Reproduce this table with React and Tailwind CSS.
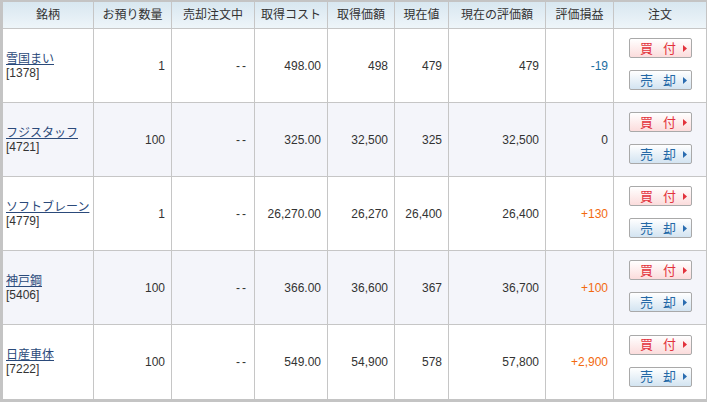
const columns = [
  { label: '銘柄', w: 'w-[91px]' },
  { label: 'お預り数量', w: 'w-[78px]' },
  { label: '売却注文中', w: 'w-[83px]' },
  { label: '取得コスト', w: 'w-[73px]' },
  { label: '取得価額', w: 'w-[67px]' },
  { label: '現在値', w: 'w-[54px]' },
  { label: '現在の評価額', w: 'w-[97px]' },
  { label: '評価損益', w: 'w-[68px]' },
  { label: '注文', w: 'w-[92px]' },
]

const rows = [
  { name: '雪国まい', code: '1378', qty: '1', cost: '498.00', amount: '498', price: '479', value: '479', pl: '-19' },
  { name: 'フジスタッフ', code: '4721', qty: '100', cost: '325.00', amount: '32,500', price: '325', value: '32,500', pl: '0' },
  { name: 'ソフトブレーン', code: '4779', qty: '1', cost: '26,270.00', amount: '26,270', price: '26,400', value: '26,400', pl: '+130' },
  { name: '神戸鋼', code: '5406', qty: '100', cost: '366.00', amount: '36,600', price: '367', value: '36,700', pl: '+100' },
  { name: '日産車体', code: '7222', qty: '100', cost: '549.00', amount: '54,900', price: '578', value: '57,800', pl: '+2,900' },
]

const plColor = (pl) => {
  if (pl.startsWith('-')) return 'text-[#1c6d9f]'
  if (pl.startsWith('+')) return 'text-[#f26a10]'
  return 'text-[#333]'
}

const Arrow = ({ color }) => (
  <svg width="4" height="7" viewBox="0 0 4 7" className="shrink-0 ml-[7px]">
    <path d="M0 0 L4 3.5 L0 7 Z" fill={color} />
  </svg>
)

const OrderButton = ({ kind }) => {
  const buy = kind === 'buy'
  return (
    <button
      className={`flex items-center w-[63px] h-[20px] border border-[#a9a9a9] rounded-[2px] pl-[10px] text-[13px] leading-none ${
        buy ? 'bg-gradient-to-b from-white to-[#fbdcdc] text-[#e2323c]' : 'bg-gradient-to-b from-white to-[#d3e4f1] text-[#2468a6]'
      }`}
    >
      <span>{buy ? '買' : '売'}</span>
      <span className="ml-[10px]">{buy ? '付' : '却'}</span>
      <Arrow color={buy ? '#e2323c' : '#2a6cb0'} />
    </button>
  )
}

const Cell = ({ w, children, last, className = '' }) => (
  <div className={`${w} shrink-0 flex items-center ${last ? '' : 'border-r border-[#c6c6c6]'} ${className}`}>
    {children}
  </div>
)

export default function App() {
  return (
    <div
      className="w-[708px] h-[403px] bg-white text-[12px] text-[#333]"
      style={{ fontFamily: '"Liberation Sans", "Noto Sans CJK JP", sans-serif' }}
    >
      <div className="w-[707px] border-l-[3px] border-t-2 border-b-[3px] border-r border-[#c4c4c4]">
        {/* header */}
        <div className="flex h-[27px] border-b border-[#c6c6c6] bg-gradient-to-b from-[#d8e7f0] to-[#eef5f9]">
          {columns.map((c, i) => (
            <Cell key={c.label} w={c.w} last={i === columns.length - 1} className="justify-center">
              {c.label}
            </Cell>
          ))}
        </div>

        {rows.map((r, idx) => (
          <div
            key={r.code}
            className={`flex h-[74px] ${idx < rows.length - 1 ? 'border-b border-[#c6c6c6]' : ''} ${
              idx % 2 === 1 ? 'bg-[#f4f5fa]' : 'bg-white'
            }`}
          >
            <Cell w={columns[0].w} className="pl-[3px]">
              <div className="leading-[14px]">
                <a href="#" className="text-[#2b4a7a] underline underline-offset-1 block">{r.name}</a>
                <div>[{r.code}]</div>
              </div>
            </Cell>
            <Cell w={columns[1].w} className="justify-end pr-[6px]">{r.qty}</Cell>
            <Cell w={columns[2].w} className="justify-end pr-[6px] tracking-[2px]">--</Cell>
            <Cell w={columns[3].w} className="justify-end pr-[6px]">{r.cost}</Cell>
            <Cell w={columns[4].w} className="justify-end pr-[6px]">{r.amount}</Cell>
            <Cell w={columns[5].w} className="justify-end pr-[6px]">{r.price}</Cell>
            <Cell w={columns[6].w} className="justify-end pr-[6px]">{r.value}</Cell>
            <Cell w={columns[7].w} className={`justify-end pr-[5px] ${plColor(r.pl)}`}>{r.pl}</Cell>
            <Cell w={columns[8].w} last className="flex-col justify-center gap-[12px] pl-[15px] pb-[3px] items-start">
              <OrderButton kind="buy" />
              <OrderButton kind="sell" />
            </Cell>
          </div>
        ))}
      </div>
    </div>
  )
}
